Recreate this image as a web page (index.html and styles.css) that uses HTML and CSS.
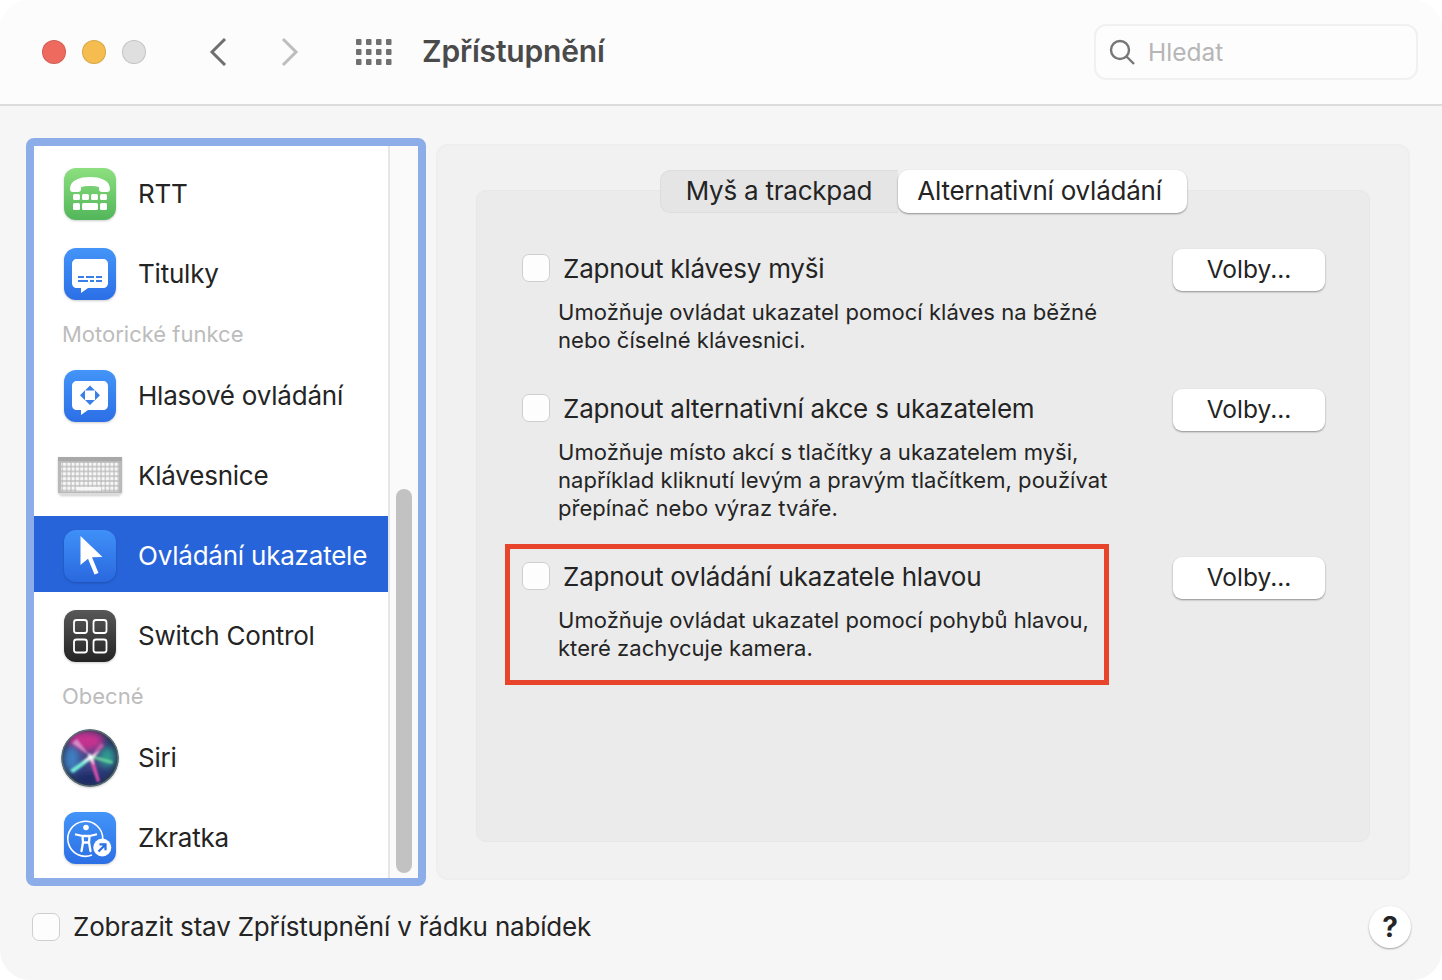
FILE: index.html
```html
<!DOCTYPE html>
<html lang="cs">
<head>
<meta charset="utf-8">
<title>Zpřístupnění</title>
<link rel="stylesheet" href="styles.css">
</head>
<body>
<div class="window">
  <header class="toolbar">
    <div class="lights">
      <span class="light red"></span>
      <span class="light yellow"></span>
      <span class="light grey"></span>
    </div>
    <svg class="chev back" viewBox="0 0 18 30"><path d="M16 2 3 15l13 13"/></svg>
    <svg class="chev fwd" viewBox="0 0 18 30"><path d="M2 2l13 13L2 28"/></svg>
    <svg class="gridicon" viewBox="0 0 36 26"><g><rect x="0" y="0" width="5.500" height="6" rx="1"/><rect x="10" y="0" width="5.500" height="6" rx="1"/><rect x="20" y="0" width="5.500" height="6" rx="1"/><rect x="30" y="0" width="5.500" height="6" rx="1"/><rect x="0" y="10" width="5.500" height="6" rx="1"/><rect x="10" y="10" width="5.500" height="6" rx="1"/><rect x="20" y="10" width="5.500" height="6" rx="1"/><rect x="30" y="10" width="5.500" height="6" rx="1"/><rect x="0" y="20" width="5.500" height="6" rx="1"/><rect x="10" y="20" width="5.500" height="6" rx="1"/><rect x="20" y="20" width="5.500" height="6" rx="1"/><rect x="30" y="20" width="5.500" height="6" rx="1"/></g></svg>
    <h1 class="title">Zpřístupnění</h1>
    <div class="search">
      <svg class="searchicon" viewBox="0 0 26 26"><circle cx="11" cy="11" r="9"/><path d="M17.500 17.500 25 25"/></svg>
      <span class="placeholder">Hledat</span>
    </div>
  </header>

  <main class="main">
    <div class="sidebar">
      <div class="list">
        <div class="row">
          <svg class="icon" viewBox="0 0 52 52"><defs><linearGradient id="g1" x1="0" y1="0" x2="0" y2="1"><stop offset="0" stop-color="#8ddf7f"/><stop offset="1" stop-color="#52b65a"/></linearGradient></defs><rect width="52" height="52" rx="12" fill="url(#g1)"/><path fill="#fff" d="M6 21C6 12 16 9 26 9s20 3 20 12c0 2-1 3-3 3h-5c-2 0-3-1-3-3v-2c-3-1.500-15-1.500-18 0v2c0 2-1 3-3 3H9c-2 0-3-1-3-3z"/><g fill="#fff"><rect x="9" y="26" width="7" height="6" rx="1.500"/><rect x="18" y="26" width="7" height="6" rx="1.500"/><rect x="27" y="26" width="7" height="6" rx="1.500"/><rect x="36" y="26" width="7" height="6" rx="1.500"/><rect x="9" y="35" width="7" height="7" rx="1.500"/><rect x="18" y="35" width="16" height="7" rx="1.500"/><rect x="36" y="35" width="7" height="7" rx="1.500"/></g></svg>
          <span class="name">RTT</span>
        </div>
        <div class="row">
          <svg class="icon" viewBox="0 0 52 52"><defs><linearGradient id="g2" x1="0" y1="0" x2="0" y2="1"><stop offset="0" stop-color="#4394f8"/><stop offset="1" stop-color="#2c6fe6"/></linearGradient></defs><rect width="52" height="52" rx="12" fill="url(#g2)"/><path fill="#fff" d="M13 11h26c3 0 5 2 5 5v19c0 3-2 5-5 5H24l-7 5v-5h-4c-3 0-5-2-5-5V16c0-3 2-5 5-5z"/><path stroke="#3a7fe8" stroke-width="2" d="M14 29h6m2 0h8m2 0h6M14 33h10m2 0h4m2 0h6"/></svg>
          <span class="name">Titulky</span>
        </div>
        <div class="group">Motorické funkce</div>
        <div class="row">
          <svg class="icon" viewBox="0 0 52 52"><rect width="52" height="52" rx="12" fill="url(#g2)"/><path fill="#fff" d="M13 11h26c3 0 5 2 5 5v19c0 3-2 5-5 5H24l-7 5v-5h-4c-3 0-5-2-5-5V16c0-3 2-5 5-5z"/><g fill="#3a7fe8"><path d="M26 15.500l5 5H21zM26 35l5-5H21zM16 25.300l5-5v10zM36 25.300l-5-5v10z"/></g></svg>
          <span class="name">Hlasové ovládání</span>
        </div>
        <div class="row">
          <svg class="icon keyboard" viewBox="0 0 64 38"><defs><pattern id="keys" width="4.300" height="4.800" patternUnits="userSpaceOnUse"><rect width="4.300" height="4.800" fill="#bcbcbc"/><rect x=".6" y=".7" width="3.200" height="3.400" fill="#f7f7f7"/></pattern></defs><rect y="0" width="64" height="36" fill="#b9b9b9"/><rect width="64" height="4" fill="#a8a8a8"/><rect x="3" y="5.500" width="58" height="29" fill="url(#keys)"/><rect x="19" y="30" width="24" height="3.500" fill="#f7f7f7"/><rect y="36" x="2" width="60" height="2" fill="#dcdcdc"/></svg>
          <span class="name">Klávesnice</span>
        </div>
        <div class="row selected">
          <svg class="icon" viewBox="0 0 52 52"><defs><linearGradient id="g3" x1="0" y1="0" x2="0" y2="1"><stop offset="0" stop-color="#3f90f8"/><stop offset="1" stop-color="#2a68de"/></linearGradient></defs><rect width="52" height="52" rx="12" fill="url(#g3)"/><path fill="#fff" d="M16.500 6 38.500 27l-10.500.3L34.500 43l-4 1.500-6.500-15.800-7.500 6.300z"/></svg>
          <span class="name">Ovládání ukazatele</span>
        </div>
        <div class="row">
          <svg class="icon" viewBox="0 0 52 52"><defs><linearGradient id="g4" x1="0" y1="0" x2="0" y2="1"><stop offset="0" stop-color="#585858"/><stop offset="1" stop-color="#232323"/></linearGradient></defs><rect width="52" height="52" rx="12" fill="url(#g4)"/><g fill="none" stroke="#fff" stroke-width="1.800"><rect x="10" y="10" width="13" height="13" rx="2.500"/><rect x="29.500" y="10" width="13" height="13" rx="2.500"/><rect x="10" y="29.500" width="13" height="13" rx="2.500"/><rect x="29.500" y="29.500" width="13" height="13" rx="2.500"/></g></svg>
          <span class="name">Switch Control</span>
        </div>
        <div class="group">Obecné</div>
        <div class="row">
          <svg class="icon siri" viewBox="0 0 58 58"><defs><radialGradient id="s1" cx=".5" cy=".5" r=".5"><stop offset="0" stop-color="#4a4a8c"/><stop offset=".75" stop-color="#2b3a78"/><stop offset="1" stop-color="#26384a"/></radialGradient><clipPath id="sc"><circle cx="29" cy="29" r="28"/></clipPath><filter id="b3" x="-50%" y="-50%" width="200%" height="200%"><feGaussianBlur stdDeviation="3.500"/></filter><filter id="b1" x="-50%" y="-50%" width="200%" height="200%"><feGaussianBlur stdDeviation=".8"/></filter></defs><circle cx="29" cy="29" r="28.500" fill="url(#s1)"/><g clip-path="url(#sc)"><ellipse cx="25" cy="12" rx="18" ry="10" fill="#c5328f" filter="url(#b3)"/><ellipse cx="11" cy="30" rx="8" ry="13" fill="#3f7fc0" filter="url(#b3)"/><ellipse cx="46" cy="28" rx="8" ry="10" fill="#2f9c90" filter="url(#b3)"/><ellipse cx="29" cy="50" rx="14" ry="6" fill="#1d2a66" filter="url(#b3)"/><g filter="url(#b1)"><path d="M29 27 9 41l3 3 19-14z" fill="#74efd8"/><path d="M29 27 16 10l-5 4z" fill="#e6a6d8" opacity=".75"/><path d="M29 28 40 14l3 3-12 13z" fill="#d65fb0" opacity=".85"/><path d="M30 26 52 32l-1 3-21-6z" fill="#6fdca0" opacity=".85"/><path d="M28 29 36 53l3-1-7-24z" fill="#e04fae"/><path d="M28 24l3 3 8-5-7 7 1 7-4-6-9 4 7-6z" fill="#fff"/></g></g><circle cx="29" cy="29" r="28" fill="none" stroke="#596d72" stroke-width="1.500"/></svg>
          <span class="name">Siri</span>
        </div>
        <div class="row">
          <svg class="icon" viewBox="0 0 52 52"><rect width="52" height="52" rx="12" fill="url(#g2)"/><path fill="none" stroke="#fff" stroke-width="1.600" d="M38.800 27A17.500 17.500 0 1 0 28 43"/><circle cx="22" cy="15.500" r="2.800" fill="#fff"/><path fill="none" stroke="#fff" stroke-width="2.300" stroke-linecap="round" stroke-linejoin="round" d="M12 22.500l6.500 1.500h7l6.500-1.500M18.500 24.500l.5 6-1.500 8.500M25.500 24.500l-.5 6 1.500 8.500M19.500 30.500h5"/><circle cx="38.300" cy="35.500" r="9" fill="#fff"/><path fill="none" stroke="#2c6fe6" stroke-width="2.200" d="M34.500 39.500l7-7M35.500 32.300h6v6"/></svg>
          <span class="name">Zkratka</span>
        </div>
      </div>
      <div class="gutter"><div class="thumb"></div></div>
    </div>

    <section class="panel">
      <div class="tabs">
        <div class="tab">Myš a trackpad</div>
        <div class="tab active">Alternativní ovládání</div>
      </div>
      <div class="inner">
        <div class="option">
          <div class="text">
            <div class="head"><span class="check"></span><span class="label">Zapnout klávesy myši</span></div>
            <p class="desc">Umožňuje ovládat ukazatel pomocí kláves na běžné<br>nebo číselné klávesnici.</p>
          </div>
          <button class="btn">Volby...</button>
        </div>
        <div class="option">
          <div class="text">
            <div class="head"><span class="check"></span><span class="label">Zapnout alternativní akce s ukazatelem</span></div>
            <p class="desc">Umožňuje místo akcí s tlačítky a ukazatelem myši,<br>například kliknutí levým a pravým tlačítkem, používat<br>přepínač nebo výraz tváře.</p>
          </div>
          <button class="btn">Volby...</button>
        </div>
        <div class="option">
          <div class="text">
            <div class="highlight"></div>
            <div class="head"><span class="check"></span><span class="label">Zapnout ovládání ukazatele hlavou</span></div>
            <p class="desc">Umožňuje ovládat ukazatel pomocí pohybů hlavou,<br>které zachycuje kamera.</p>
          </div>
          <button class="btn">Volby...</button>
        </div>
      </div>
    </section>
  </main>

  <footer class="bottom">
    <span class="check"></span>
    <span class="label bottomlabel">Zobrazit stav Zpřístupnění v řádku nabídek</span>
    <button class="help">?</button>
  </footer>
</div>
</body>
</html>
```
FILE: styles.css
```css
* { box-sizing: border-box; }
html, body { margin: 0; padding: 0; background: #fff; }
body { font-family: Inter, "Noto Sans", "Liberation Sans", sans-serif; color: #242424; }
.window { width: 1442px; height: 980px; background: #f6f6f6; border-radius: 30px; overflow: hidden; display: flex; flex-direction: column; }

.toolbar { height: 106px; flex: none; background: #fcfcfc; border-bottom: 2px solid #dcdcdc; display: flex; align-items: center; padding: 0 24px 0 42px; }
.lights { display: flex; gap: 16px; }
.light { width: 24px; height: 24px; border-radius: 50%; border: 1px solid rgba(0,0,0,.12); }
.red { background: #ee6a5f; }
.yellow { background: #f5bd4f; }
.grey { background: #dfdfdf; }
.chev { width: 18px; height: 30px; fill: none; stroke-width: 3px; }
.back { margin-left: 63px; stroke: #6f6f6f; }
.fwd { margin-left: 54px; stroke: #bdbdbd; }
.gridicon { width: 36px; height: 26px; margin-left: 57px; fill: #707070; }
.title { margin: 0 0 0 30px; font-size: 30px; font-weight: 600; color: #4a4a4a; letter-spacing: -.18px; line-height: 36px; padding-bottom: 2px; flex: 1; }
.search { width: 324px; height: 56px; background: #fdfdfd; border: 2px solid #f1f1f1; border-radius: 12px; display: flex; align-items: center; padding-left: 13px; gap: 13px; }
.searchicon { width: 26px; height: 26px; fill: none; stroke: #777; stroke-width: 2.400px; }
.placeholder { font-size: 24.500px; color: #b6b6b6; }

.main { display: flex; align-items: flex-start; padding: 32px 32px 0 26px; }
.sidebar { width: 400px; height: 748px; flex: none; border: 8px solid #8dade9; border-radius: 8px; background: #fff; display: flex; overflow: hidden; }
.list { width: 354px; flex: none; padding-top: 8px; overflow: hidden; background: #fff; }
.gutter { flex: 1; background: #fafafa; border-left: 2px solid #e6e6e6; padding: 343px 0 0 6px; }
.thumb { width: 16px; height: 384px; border-radius: 8px; background: #c2c2c2; }
.row { height: 76px; margin-bottom: 4px; padding: 4px 0 0 30px; display: flex; align-items: center; gap: 22px; }
.icon { width: 52px; height: 52px; flex: none; filter: drop-shadow(0 1px 1px rgba(0,0,0,.2)); }
.keyboard { width: 64px; height: 38px; margin: 0 -6px; }
.siri { width: 58px; height: 58px; margin: 0 -3px; }
.name { font-size: 26px; letter-spacing: -.22px; margin-top: -2px; color: #242424; white-space: nowrap; }
.group { height: 42px; padding: 10px 0 0 28px; font-size: 22px; line-height: 28px; color: #bcbcbc; margin-top: -4px; margin-bottom: 4px; }
.selected { background: #2764d9; }
.selected .name { color: #fff; }

.panel { width: 974px; height: 736px; margin: 6px 0 0 10px; background: #f1f1f1; border: 2px solid #eeeeee; border-radius: 12px; padding: 24px 38px 36px; display: flex; flex-direction: column; align-items: center; }
.tabs { display: flex; height: 43px; margin-bottom: -23px; z-index: 1; position: relative; }
.tab { height: 43px; width: 238px; background: #e5e5e5; border: 1px solid #dddddd; border-right: 0; border-radius: 10px 0 0 10px; font-size: 26px; letter-spacing: -.24px; line-height: 39px; text-align: center; color: #242424; }
.tab.active { width: 289px; background: #fff; border: 0; border-radius: 10px; line-height: 41px; padding-right: 5px; box-shadow: 0 1px 2px rgba(0,0,0,.4); }
.inner { width: 894px; flex: 1; align-self: center; background: #ebebeb; border: 1px solid #e7e7e7; border-radius: 10px; padding: 58px 44px 0 45px; display: flex; flex-direction: column; gap: 35px; }
.option { display: flex; justify-content: space-between; align-items: flex-start; }
.text { position: relative; padding-top: 5px; }
.head { display: flex; align-items: center; gap: 13px; height: 28px; }
.check { width: 28px; height: 28px; flex: none; background: #fdfdfd; border: 1px solid #cfcfcf; border-radius: 7px; }
.label { font-size: 26px; letter-spacing: -.22px; color: #242424; white-space: nowrap; }
.desc { margin: 16px 0 0 36px; font-size: 22px; letter-spacing: .04px; line-height: 28px; color: #242424; }
.btn { width: 152px; height: 42px; font: inherit; font-size: 24.500px; color: #242424; background: #fff; border: 0; border-radius: 9px; box-shadow: 0 1px 2px rgba(0,0,0,.4); padding: 0 0 3px; }
.highlight { position: absolute; left: -17px; top: -13px; width: 604px; height: 141px; border: 5px solid #e8442b; }

.bottom { display: flex; align-items: center; padding: 20px 31px 0 32px; gap: 13px; }
.bottomlabel { flex: 1; margin-top: -2px; letter-spacing: -.18px; }
.help { width: 42px; height: 42px; border: 0; border-radius: 50%; background: #fff; box-shadow: 0 1px 2px rgba(0,0,0,.35); font: inherit; font-size: 28px; font-weight: 700; color: #242424; padding: 0; }
```
